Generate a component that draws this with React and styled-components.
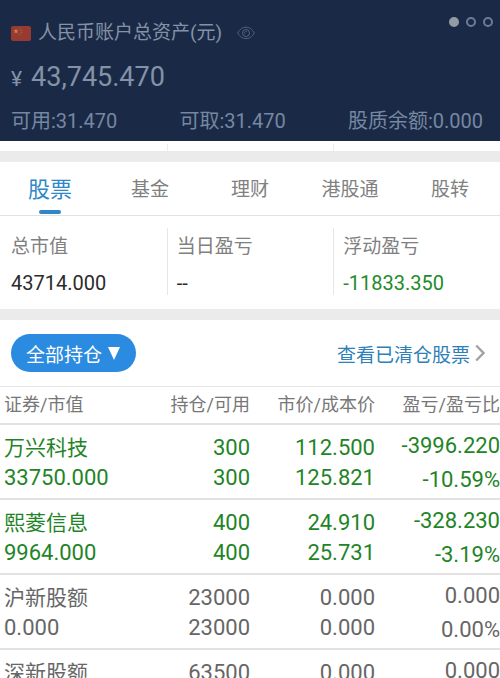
import React, { useState } from "react";
import styled, { createGlobalStyle, css } from "styled-components";

const tabs = ["股票", "基金", "理财", "港股通", "股转"];

const summary = [
    { label: "总市值", value: "43714.000" },
    { label: "当日盈亏", value: "--" },
    { label: "浮动盈亏", value: "-11833.350", down: true },
];

const holdings = [
    { name: "万兴科技", total: "33750.000", amount: "300", usable: "300", price: "112.500", cost: "125.821", profit: "-3996.220", rate: "-10.59%", down: true },
    { name: "熙菱信息", total: "9964.000", amount: "400", usable: "400", price: "24.910", cost: "25.731", profit: "-328.230", rate: "-3.19%", down: true },
    { name: "沪新股额", total: "0.000", amount: "23000", usable: "23000", price: "0.000", cost: "0.000", profit: "0.000", rate: "0.00%" },
    { name: "深新股额", total: "0.000", amount: "63500", usable: "63500", price: "0.000", cost: "0.000", profit: "0.000", rate: "0.00%" },
];

const FlagIcon = () => (
    <svg width="20" height="15" viewBox="0 0 20 15" aria-hidden="true">
        <rect width="20" height="15" rx="2" fill="#973a32" />
        <path d="M5 2.6l.7 1.7 1.8.1-1.4 1.2.5 1.8L5 6.4l-1.6 1 .5-1.8-1.4-1.2 1.8-.1z" fill="#c08a48" />
        <g fill="#a8653a">
            <circle cx="9" cy="2.5" r=".7" />
            <circle cx="10.5" cy="4.3" r=".7" />
            <circle cx="10.4" cy="6.5" r=".7" />
            <circle cx="8.8" cy="8.2" r=".7" />
        </g>
    </svg>
);

const EyeIcon = () => (
    <svg width="18" height="14" viewBox="0 0 18 14" fill="none" stroke="#55647e" aria-hidden="true">
        <path d="M.7 7C3 3 5.800 1.200 9 1.200S15 3 17.300 7C15 11 12.200 12.600 9 12.600S3 11 .7 7z" />
        <circle cx="9" cy="7" r="3.500" />
        <path d="M7.500 7.500A1.700 1.700 0 0 1 9.500 5.500" />
    </svg>
);

const ArrowIcon = () => (
    <svg width="10" height="18" viewBox="0 0 10 18" fill="none" stroke="#a2a2a2" strokeWidth="2.400" aria-hidden="true">
        <path d="M1.200 1.500L8.500 9L1.200 16.500" />
    </svg>
);

export default function App() {
    const [active, setActive] = useState("股票");

    return (
        <>
            <GlobalStyle />
            <Page>
                <Header>
                    <TitleRow>
                        <FlagIcon />
                        <Title>人民币账户总资产(元)</Title>
                        <EyeButton type="button" aria-label="隐藏资产"><EyeIcon /></EyeButton>
                        <Dots>
                            <Dot $filled />
                            <Dot />
                            <Dot />
                        </Dots>
                    </TitleRow>
                    <Total><Currency>¥</Currency>43,745.470</Total>
                    <Balances>
                        <span>可用:31.470</span>
                        <span>可取:31.470</span>
                        <span>股质余额:0.000</span>
                    </Balances>
                </Header>
                <Strip>
                    <StripCell />
                    <StripCell />
                    <StripCell />
                </Strip>
                <Gap />
                <Tabs>
                    {tabs.map((tab) => (
                        <Tab key={tab} type="button" $active={tab === active} onClick={() => setActive(tab)}>
                            {tab}
                        </Tab>
                    ))}
                </Tabs>
                <Summary>
                    {summary.map((item) => (
                        <SummaryItem key={item.label}>
                            <SummaryLabel>{item.label}</SummaryLabel>
                            <SummaryValue $down={item.down}>{item.value}</SummaryValue>
                        </SummaryItem>
                    ))}
                </Summary>
                <Gap />
                <Toolbar>
                    <FilterButton type="button">
                        全部持仓
                        <Triangle viewBox="0 0 12 13" aria-hidden="true"><path d="M0 0h12L6 13z" /></Triangle>
                    </FilterButton>
                    <ClearedLink href="#cleared">查看已清仓股票<ArrowIcon /></ClearedLink>
                </Toolbar>
                <Table>
                    <thead>
                        <tr>
                            <Th>证券/市值</Th>
                            <Th>持仓/可用</Th>
                            <Th>市价/成本价</Th>
                            <Th>盈亏/盈亏比</Th>
                        </tr>
                    </thead>
                    <tbody>
                        {holdings.map((row) => (
                            <Row key={row.name} $down={row.down}>
                                <Td><Name>{row.name}</Name><Line>{row.total}</Line></Td>
                                <Td><Line>{row.amount}</Line><Line>{row.usable}</Line></Td>
                                <Td><Line>{row.price}</Line><Line>{row.cost}</Line></Td>
                                <Td><Line $tall>{row.profit}</Line><Line $tall>{row.rate}</Line></Td>
                            </Row>
                        ))}
                    </tbody>
                </Table>
            </Page>
        </>
    );
}

const GlobalStyle = createGlobalStyle`
    * {box-sizing: border-box;}
    body {margin: 0; background: #fff;}
    button {border: 0; padding: 0; background: none; font: inherit; cursor: pointer;}
`
const Page = styled.div`
    height: 100vh; overflow: hidden auto; scrollbar-width: none; background: #fff; color: #666;
    font-family: Roboto, "Noto Sans CJK SC", sans-serif;
`
const Header = styled.header`
    background: #1a2a46; color: #8492a8; padding: 17px 17px 4px 11px;
`
const TitleRow = styled.div`
    display: flex; align-items: center; height: 32px;
`
const Title = styled.h1`
    margin: 0 15px 0 7px; font-size: 19px; line-height: 32px; font-weight: 400;
`
const EyeButton = styled.button`
    display: flex;
`
const Dots = styled.div`
    display: flex; align-self: flex-start; gap: 7px; margin-left: auto; margin-right: -10px;
`
const Dot = styled.span`
    width: 10px; height: 10px; border-radius: 50%; border: 2px solid #6c7c93;
    ${({ $filled }) => $filled && css`background: #929ba6; border-color: #929ba6;`}
`
const Total = styled.div`
    font-size: 27px; line-height: 32px; margin-top: 12px;
`
const Currency = styled.span`
    font-size: 21px; margin-right: 9px;
`
const Balances = styled.div`
    display: flex; justify-content: space-between; margin-top: 10px; font-size: 20px; line-height: 32px; color: #7687a1;
`
const Strip = styled.div`
    display: grid; grid-template-columns: repeat(3, 1fr); height: 10px; padding-top: 3px;
`
const StripCell = styled.div`
    & + & {border-left: 1px solid #ececec;}
`
const Gap = styled.div`
    height: 11px; background: #ebebeb;
`
const Tabs = styled.nav`
    display: grid; grid-template-columns: repeat(5, 1fr); height: 54px; border-bottom: 1px solid #e2e2e2;
`
const Tab = styled.button`
    display: flex; flex-direction: column; align-items: center; font-size: 19px; line-height: 56px; color: #808080;
    ${({ $active }) => $active && css`
        font-size: 22px; color: #2e87c8;
        &:after {content: ""; width: 22px; height: 4px; border-radius: 2px; background: #2e87c8; margin-top: -8px;}
    `}
`
const Summary = styled.section`
    display: grid; grid-template-columns: repeat(3, 1fr); padding: 12px 0 14px;
`
const SummaryItem = styled.div`
    height: 67px; padding-left: 11px;
    & + & {border-left: 1px solid #e6e6e6; padding-left: 9px;}
`
const SummaryLabel = styled.div`
    font-size: 19px; line-height: 38px; color: #808080;
`
const SummaryValue = styled.div`
    font-size: 20px; line-height: 34px; color: ${({ $down }) => $down ? "#228b2c" : "#2b2b2b"};
`
const Toolbar = styled.div`
    display: flex; align-items: center; justify-content: space-between; height: 66px; padding: 0 15px 0 11px;
`
const FilterButton = styled.button`
    display: flex; align-items: center; gap: 6px; height: 38px; padding: 0 16px 0 15px; border-radius: 19px;
    background: #2a8be0; color: #fff; font-size: 19px;
`
const Triangle = styled.svg`
    width: 12px; height: 13px; fill: #fff;
`
const ClearedLink = styled.a`
    display: flex; align-items: center; gap: 5px; color: #2e80b8; font-size: 19px; text-decoration: none;
`
const Table = styled.table`
    width: 100%; table-layout: fixed; border-collapse: collapse; border-top: 1px solid #e6e6e6;
`
const Th = styled.th`
    height: 37px; padding: 0; font-size: 18px; line-height: 36px; font-weight: 400; text-align: right; color: #777; white-space: nowrap;
    &:first-child {text-align: left; padding-left: 4px;}
`
const Row = styled.tr`
    color: ${({ $down }) => $down ? "#1f8428" : "#666"};
`
const Td = styled.td`
    height: 75px; padding: 2px 0 0; border-top: 2px solid #e2e2e4; text-align: right;
    &:first-child {text-align: left; padding-left: 4px;}
`
const Line = styled.div`
    font-size: 22px; line-height: ${({ $tall }) => $tall ? 34 : 30}px;
`
const Name = styled.div`
    font-size: 21px; line-height: 30px;
`
